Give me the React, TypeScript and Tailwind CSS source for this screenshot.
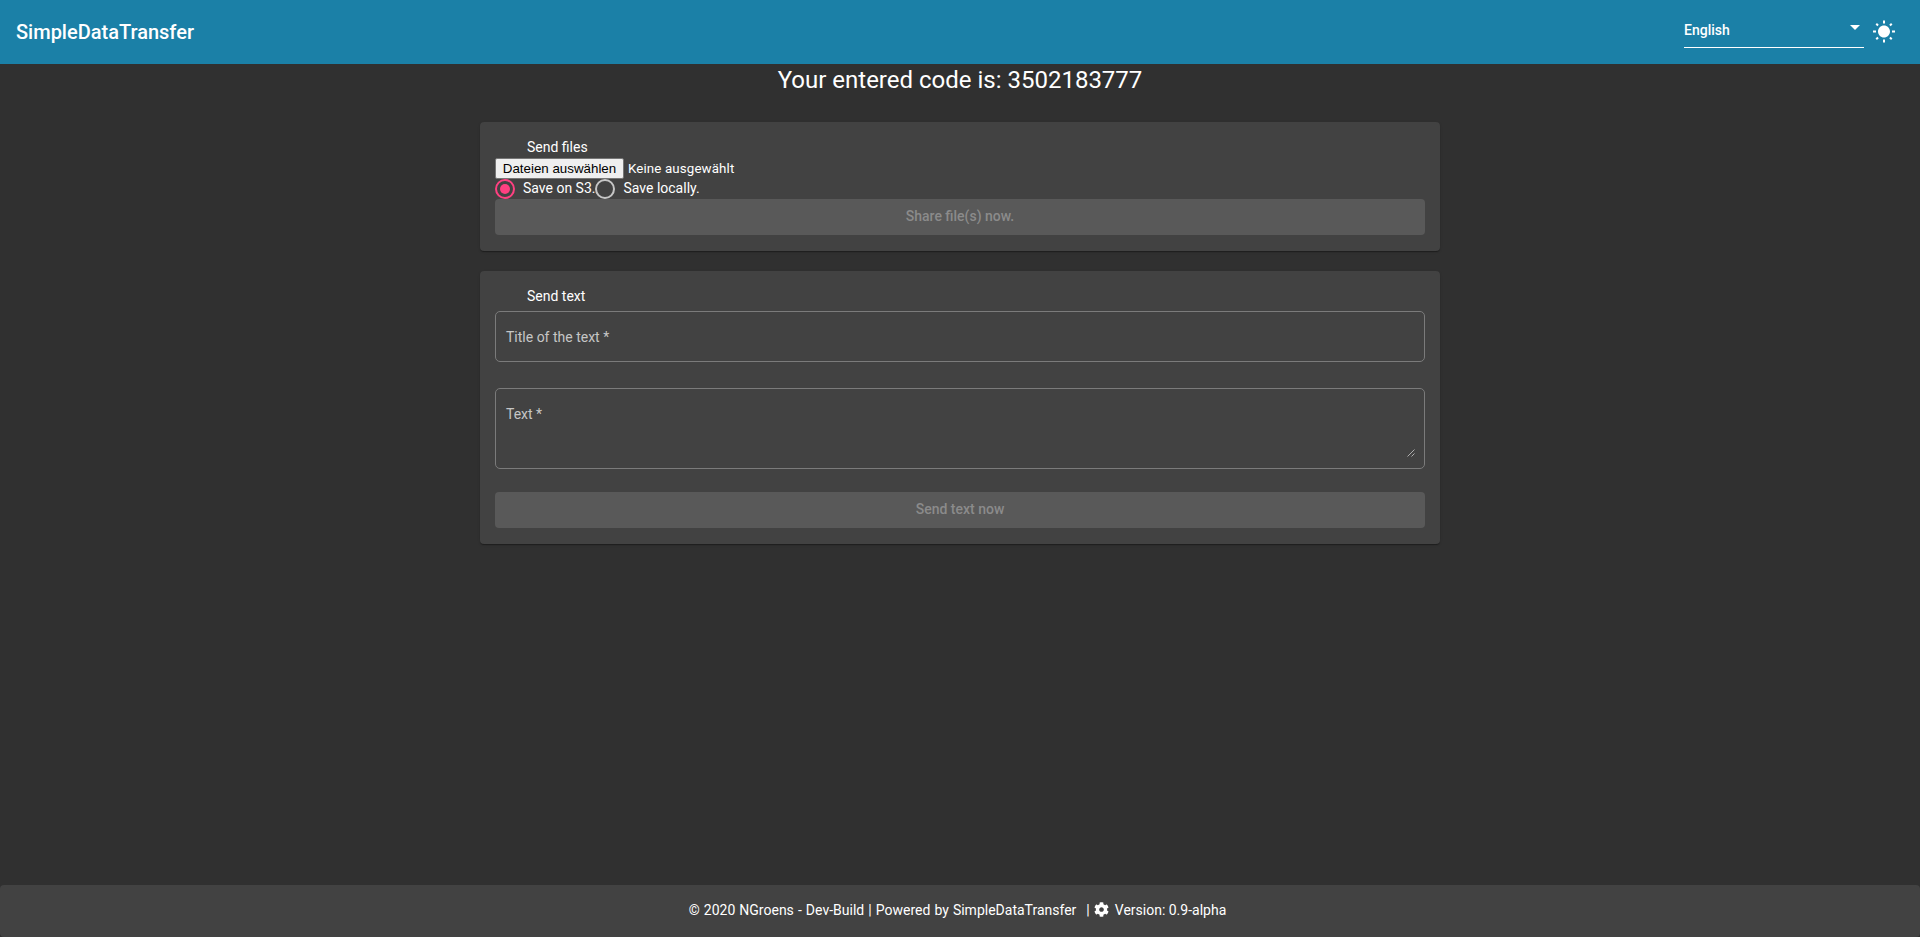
import type { ReactNode } from 'react';
import { FaCog } from 'react-icons/fa';

function Card({ className, children }: { className: string; children: ReactNode }) {
  return (
    <section
      className={`mx-auto flex w-[960px] flex-col rounded bg-[#424242] px-[15px] shadow-[0_2px_1px_-1px_rgba(0,0,0,0.2),0_1px_1px_0_rgba(0,0,0,0.14),0_1px_3px_0_rgba(0,0,0,0.12)] ${className}`}
    >
      {children}
    </section>
  );
}

function Radio({ checked, label }: { checked?: boolean; label: string }) {
  return (
    <label className="flex h-5 items-center">
      <span
        className={`flex size-5 items-center justify-center rounded-full border-2 ${checked ? 'border-[#ff4081]' : 'border-[#c6c6c6]'}`}
      >
        {checked && <span className="size-2.5 rounded-full bg-[#ff4081]" />}
      </span>
      <span className="-mt-0.5 pl-2 leading-[18px]">{label}</span>
    </label>
  );
}

function ActionButton({ children }: { children: ReactNode }) {
  return (
    <button
      disabled
      className="h-9 w-full shrink-0 rounded bg-[#595959] pb-0.5 text-sm font-medium text-[#8b8b8b]"
    >
      {children}
    </button>
  );
}

export default function App() {
  return (
    <div className="flex h-[937px] flex-col bg-[#303030] font-['Roboto',sans-serif] text-sm text-white">
      <header className="flex h-16 shrink-0 items-center bg-[#1b80a7] px-4">
        <h1 className="text-xl font-medium">SimpleDataTransfer</h1>
        <div className="mt-[-3px] ml-auto flex h-[35px] w-[180px] justify-between border-b border-white pt-[7px] pr-1">
          <span className="leading-5 font-medium">English</span>
          <svg className="mt-[5px] h-[5px] w-2.5" viewBox="0 0 10 5" fill="currentColor">
            <path d="M0 0h10L5 5z" />
          </svg>
        </div>
        <svg className="mr-2 ml-2 size-6" viewBox="0 0 24 24" fill="currentColor">
          <path d="M6.76 4.84l-1.8-1.79-1.41 1.41 1.79 1.79 1.42-1.41zM4 10.5H1v2h3v-2zm9-9.95h-2V3.5h2V.55zm7.45 3.91l-1.41-1.41-1.79 1.79 1.41 1.41 1.79-1.79zm-3.21 13.7l1.79 1.8 1.41-1.41-1.8-1.79-1.4 1.4zM20 10.5v2h3v-2h-3zm-8-5c-3.31 0-6 2.69-6 6s2.69 6 6 6 6-2.69 6-6-2.69-6-6-6zm-1 16.95h2V19.5h-2v2.95zm-7.45-3.91l1.41 1.41 1.79-1.8-1.41-1.41-1.79 1.8z" />
        </svg>
      </header>

      <main className="flex grow flex-col">
        <h2 className="h-[58px] text-center text-2xl leading-8">Your entered code is: 3502183777</h2>

        <Card className="h-[129px]">
          <h3 className="mt-[15px] pl-8 leading-5">Send files</h3>
          <div className="mt-px flex h-[21px] items-center text-[13.333px]">
            <button className="h-[21px] w-[129px] rounded-[2px] border border-[#767676] bg-[#efefef] font-['Liberation_Sans',Arial,sans-serif] leading-[19px] text-black">
              Dateien auswählen
            </button>
            <span className="pl-1 tracking-[0.12px]">Keine ausgewählt</span>
          </div>
          <div className="flex">
            <Radio checked label="Save on S3." />
            <Radio label="Save locally." />
          </div>
          <ActionButton>Share file(s) now.</ActionButton>
        </Card>

        <Card className="mt-5 h-[273px]">
          <h3 className="mt-[15px] pl-8 leading-5">Send text</h3>
          <div className="mt-[5px] h-[51px] shrink-0 rounded-[5px] border border-[#7b7b7b] px-2.5 pt-4 leading-[18px] text-[#c6c6c6]">
            Title of the text *
          </div>
          <div className="mt-[26px] flex h-[81px] shrink-0 justify-between rounded-[5px] border border-[#7b7b7b] pt-4 pr-[9px] pb-[11px] pl-2.5 leading-[18px] text-[#c6c6c6]">
            <span>Text *</span>
            <svg className="size-2 self-end" viewBox="0 0 8 8" fill="none">
              <path d="M.5 7.5l7-7M4.500 7.500l3-3" stroke="#c8c8c8" strokeWidth="0.8" />
            </svg>
          </div>
          <div className="mt-[23px]">
            <ActionButton>Send text now</ActionButton>
          </div>
        </Card>
      </main>

      <footer className="flex h-[52px] shrink-0 items-center justify-center rounded bg-[#424242] pr-[5px] pb-0.5">
        <span className="[word-spacing:0.6px]">
          © 2020 NGroens - Dev-Build | Powered by SimpleDataTransfer
        </span>
        <span className="ml-2.5">|</span>
        <FaCog className="mr-1.5 -mt-0.5 ml-1 size-[15px]" />
        <span>Version: 0.9-alpha</span>
      </footer>
    </div>
  );
}
